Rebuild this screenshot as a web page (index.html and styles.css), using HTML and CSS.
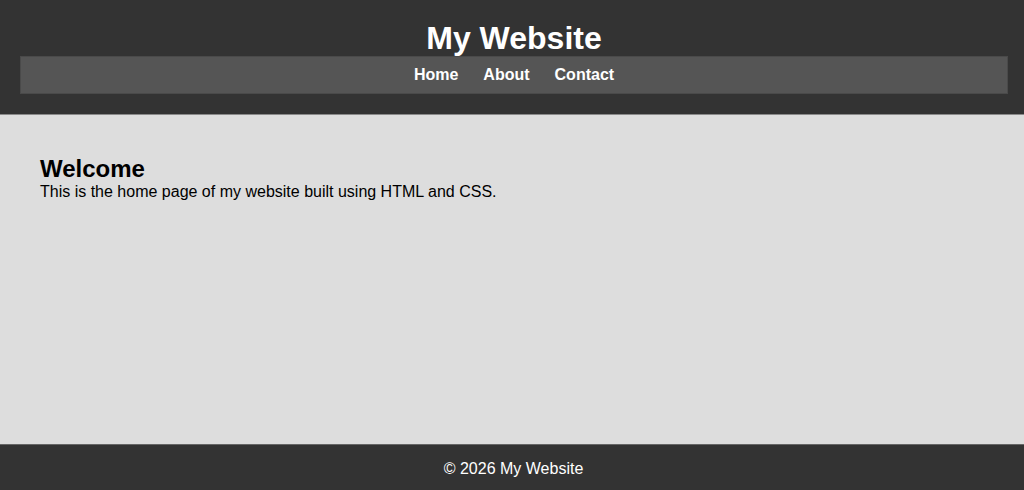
FILE: index.html
```html
<!DOCTYPE html>
<html lang="en">
<head>
<meta charset="utf-8">
<title>My Website</title>
<link rel="stylesheet" href="styles.css">
</head>
<body>
<header class="site-header">
  <h1 class="site-title">My Website</h1>
  <nav class="site-nav">
    <a href="#">Home</a>
    <a href="#">About</a>
    <a href="#">Contact</a>
  </nav>
</header>
<main class="site-main">
  <h2 class="welcome-title">Welcome</h2>
  <p class="welcome-text">This is the home page of my website built using HTML and CSS.</p>
</main>
<footer class="site-footer">© 2026 My Website</footer>
</body>
</html>
```

FILE: styles.css
```css
html, body {
  margin: 0;
  padding: 0;
  height: 100%;
}
body {
  font-family: "Liberation Sans", Arial, sans-serif;
  display: flex;
  flex-direction: column;
  min-height: 100vh;
  background: #ddd;
}
.site-header {
  background: #333;
  color: #fff;
  padding: 20px 16px 20px 20px;
  border-bottom: 1px solid #8a8a8a;
}
.site-title {
  margin: 0;
  font-size: 32px;
  text-align: center;
  line-height: 36px;
}
.site-nav {
  background: #555;
  border: 1px solid #4a4a4a;
  display: flex;
  justify-content: center;
  gap: 25px;
  padding: 9px 0;
}
.site-nav a {
  color: #fff;
  text-decoration: none;
  font-weight: bold;
  font-size: 16px;
  line-height: 18px;
}
.site-main {
  flex: 1;
  padding: 40px;
  background: #ddd;
}
.welcome-title {
  margin: 0;
  font-size: 24px;
  line-height: 28px;
}
.welcome-text {
  margin: 0;
  font-size: 16px;
  line-height: 18px;
}
.site-footer {
  background: #333;
  color: #fff;
  text-align: center;
  padding: 15px 0 12px 3px;
  font-size: 16px;
  line-height: 18px;
  border-top: 1px solid #666;
}
```
